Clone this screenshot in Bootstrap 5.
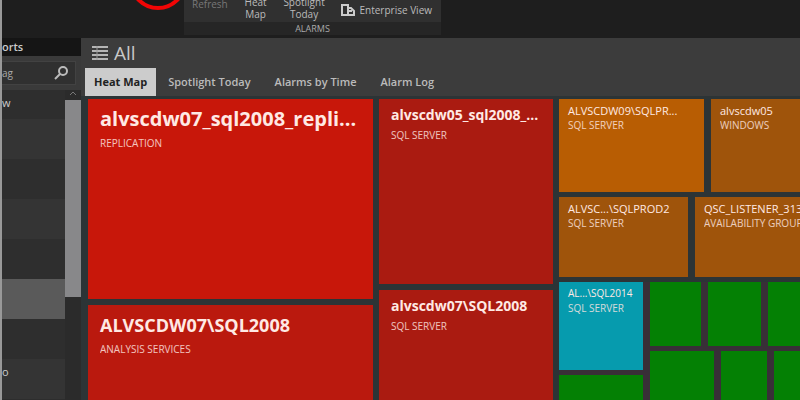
<!DOCTYPE html>
<html lang="en">
<head>
<meta charset="utf-8">
<meta name="viewport" content="width=device-width, initial-scale=1">
<title>Heat Map</title>
<link rel="stylesheet" href="https://cdn.jsdelivr.net/npm/bootstrap@5.3.0/dist/css/bootstrap.min.css">
<style>
body{font-family:"Open Sans","Noto Sans",sans-serif;background:#3c3c3c;color:#ccc;font-size:11px;line-height:14px}
.app-shell{border-left:2px solid #999}
.top-bar{background:#1e1e1e;height:38px;padding-left:127px}
.ribbon{width:257px;background:#262626}
.ribbon-tools{background:#303030;height:22px;padding:0 9px 2px 8px}
.ribbon-tools button,.tab-strip button{background:none;border:0;padding:0;color:#bbb;line-height:14px}
.ribbon-tools button{font-size:10px;line-height:12px}
.ribbon-tools .refresh-btn{color:#777;margin-bottom:10px}
.ribbon-tools .view-btn{margin-bottom:4px}
.ribbon-label{font-size:9px;line-height:13px;color:#aaa}
.side-panel{width:79px;background:#2d2d2d}
.side-head{background:#151515;height:18px;font-weight:600;line-height:17px}
.side-search{background:#3a3a3a;height:34px;padding:5px 5px 5px 0}
.search-box{background:#303030;border:1px solid #424242;border-left:0}
.search-box input{background:none;border:0;color:#aaa;font-size:10px;padding:0;width:40px;outline:0}
.search-box button{background:none;border:0;padding:0;line-height:0;margin-right:6px}
.side-row{height:40px;flex:none;background:#2e2e2e}
.side-row:nth-child(even){background:#343434}
.side-row:first-child{height:29px;padding-top:6px}
.side-row.is-selected{background:#5a5a5a}
.side-row.is-last{padding-top:6px}
.scroll-track{width:16px;background:#2b2b2b}
.scroll-arrow{height:10px;line-height:0}
.scroll-thumb{background:#88888a;height:197px}
.page-title{height:30px;font-size:19px;padding:0 12px 0 11px;gap:6px;color:#c8c8c8;line-height:28px}
.tab-strip{height:28px;padding-left:4px}
.tab-strip button{font-size:11px;padding:0 12px;font-weight:600}
.tab-strip button.is-active{background:#ccc;color:#222;font-weight:700;padding:0 9px}
.heat{background:#2c3436;padding:3px 0 0 7px;display:grid;grid-template-columns:285fr 174fr 241fr;gap:6px}
.heat>div{display:grid;gap:6px;min-width:0;min-height:0}
.col-a{grid-template-rows:200fr 95fr}
.col-b{grid-template-rows:185fr 110fr}
.heat>.col-c{grid-template-rows:93fr 80fr 118fr;gap:5px}
.split{display:grid;gap:7px;min-height:0}
.split-a{grid-template-columns:145fr 89fr}
.split-b{grid-template-columns:129fr 105fr}
.lower-grid{display:grid;grid-template-columns:84fr 150fr;gap:7px;min-height:0;background:#382f37}
.lower-grid>div{display:grid;gap:5px;min-width:0;min-height:0}
.stack-a{grid-template-rows:88fr 25fr}
.stack-b{grid-template-rows:64fr 49fr}
.split-c{grid-template-columns:51fr 53fr 32fr}
.split-d{grid-template-columns:64fr 46fr 26fr}
.tile{overflow:hidden;white-space:nowrap;min-width:0;color:#ffe9e4}
.tile h2,.tile p{margin:0}
.tile p{font-size:10px;line-height:14px;opacity:.82}
.tile-lg{padding:8px 12px}
.tile-lg h2{font-size:18px;line-height:24px;font-weight:700}
.tile-lg .first-title{font-size:20px}
.tile-lg p{line-height:24px}
.tile-md{padding:6px 12px}
.tile-md h2{font-size:14px;line-height:20px;font-weight:700}
.tile-md p{line-height:20px}
.tile-sm{padding:4px 9px}
.tile-sm h2{font-size:11px;line-height:15px;font-weight:400}
.teal h2{font-size:10px}
.red-a{background:#c8170a}
.red-b{background:#ba190e}
.red-c{background:#aa1b11}
.amber-a{background:#b85d03}
.amber-b{background:#9f540b}
.teal{background:#069bae}
.green{background:#048004}
</style>
<script src="https://cdn.jsdelivr.net/npm/bootstrap@5.3.0/dist/js/bootstrap.bundle.min.js"></script>
</head>
<body>
<div class="app-shell d-flex flex-column vh-100 overflow-hidden">
  <header class="top-bar d-flex align-items-start flex-shrink-0">
    <svg width="55" height="11" viewBox="0 0 55 11" class="flex-shrink-0" aria-hidden="true"><circle cx="29" cy="-19" r="27" fill="#171717" stroke="#f00505" stroke-width="4"/></svg>
    <div class="ribbon flex-shrink-0">
      <div class="ribbon-tools d-flex align-items-end justify-content-between">
        <button type="button" class="refresh-btn">Refresh</button>
        <button type="button">Heat<br>Map</button>
        <button type="button">Spotlight<br>Today</button>
        <button type="button" class="view-btn d-flex align-items-center gap-1 text-nowrap">
          <svg width="14" height="12" viewBox="0 0 14 12" aria-hidden="true"><path d="M1 1h6v3h3l3 3v4H1z" fill="none" stroke="#ccc" stroke-width="2"/><path d="M7 4v7M8 7h3" stroke="#ccc" stroke-width="2"/></svg>Enterprise View</button>
      </div>
      <div class="ribbon-label text-center">ALARMS</div>
    </div>
  </header>
  <div class="d-flex flex-grow-1 overflow-hidden">
    <aside class="side-panel d-flex flex-column flex-shrink-0 overflow-hidden">
      <div class="side-head flex-shrink-0">orts</div>
      <div class="side-search flex-shrink-0"><div class="search-box d-flex align-items-center justify-content-between h-100">
        <input type="text" aria-label="Search by tag" value="ag">
        <button type="button" aria-label="Search"><svg width="16" height="14" viewBox="0 0 16 14"><circle cx="10" cy="5" r="4" fill="none" stroke="#bbb" stroke-width="2"/><path d="M7 8l-5 5" stroke="#bbb" stroke-width="2"/></svg></button>
      </div></div>
      <div class="d-flex flex-grow-1 overflow-hidden">
        <div class="flex-grow-1 d-flex flex-column">
          <div class="side-row">w</div><div class="side-row"></div><div class="side-row"></div><div class="side-row"></div><div class="side-row"></div>
          <div class="side-row is-selected"></div><div class="side-row"></div><div class="side-row is-last">o</div>
        </div>
        <div class="scroll-track">
          <div class="scroll-arrow text-center"><svg width="8" height="7" viewBox="0 0 8 7" aria-hidden="true"><path d="M1 5l3-3 3 3" fill="none" stroke="#777"/></svg></div>
          <div class="scroll-thumb"></div>
        </div>
      </div>
    </aside>
    <main class="d-flex flex-column flex-grow-1 overflow-hidden">
      <div class="page-title d-flex align-items-center flex-shrink-0">
        <svg width="16" height="14" viewBox="0 0 16 14" aria-hidden="true"><path d="M0 1h16M0 5h16M0 9h16M0 13h16" stroke="#b5b5b5" stroke-width="2"/><path d="M5 0v14" stroke="#999"/></svg><span>All</span>
      </div>
      <nav class="tab-strip d-flex flex-shrink-0" aria-label="Views">
        <button type="button" class="is-active">Heat Map</button><button type="button">Spotlight Today</button><button type="button">Alarms by Time</button><button type="button">Alarm Log</button>
      </nav>
      <section class="heat flex-grow-1 overflow-hidden">
        <div class="col-a">
          <article class="tile tile-lg red-a"><h2 class="first-title">alvscdw07_sql2008_repli...</h2><p>REPLICATION</p></article>
          <article class="tile tile-lg red-b"><h2>ALVSCDW07\SQL2008</h2><p>ANALYSIS SERVICES</p></article>
        </div>
        <div class="col-b">
          <article class="tile tile-md red-c"><h2>alvscdw05_sql2008_...</h2><p>SQL SERVER</p></article>
          <article class="tile tile-md red-c"><h2>alvscdw07\SQL2008</h2><p>SQL SERVER</p></article>
        </div>
        <div class="col-c">
          <div class="split split-a">
            <article class="tile tile-sm amber-a"><h2>ALVSCDW09\SQLPR...</h2><p>SQL SERVER</p></article>
            <article class="tile tile-sm amber-b"><h2>alvscdw05</h2><p>WINDOWS</p></article>
          </div>
          <div class="split split-b">
            <article class="tile tile-sm amber-b"><h2>ALVSC...\SQLPROD2</h2><p>SQL SERVER</p></article>
            <article class="tile tile-sm amber-b"><h2>QSC_LISTENER_313</h2><p>AVAILABILITY GROUP</p></article>
          </div>
          <div class="lower-grid">
            <div class="stack-a"><article class="tile tile-sm teal"><h2>AL...\SQL2014</h2><p>SQL SERVER</p></article><div class="tile green"></div></div>
            <div class="stack-b">
              <div class="split split-c"><div class="green"></div><div class="green"></div><div class="green"></div></div>
              <div class="split split-d"><div class="green"></div><div class="green"></div><div class="green"></div></div>
            </div>
          </div>
        </div>
      </section>
    </main>
  </div>
</div>
</body>
</html>
